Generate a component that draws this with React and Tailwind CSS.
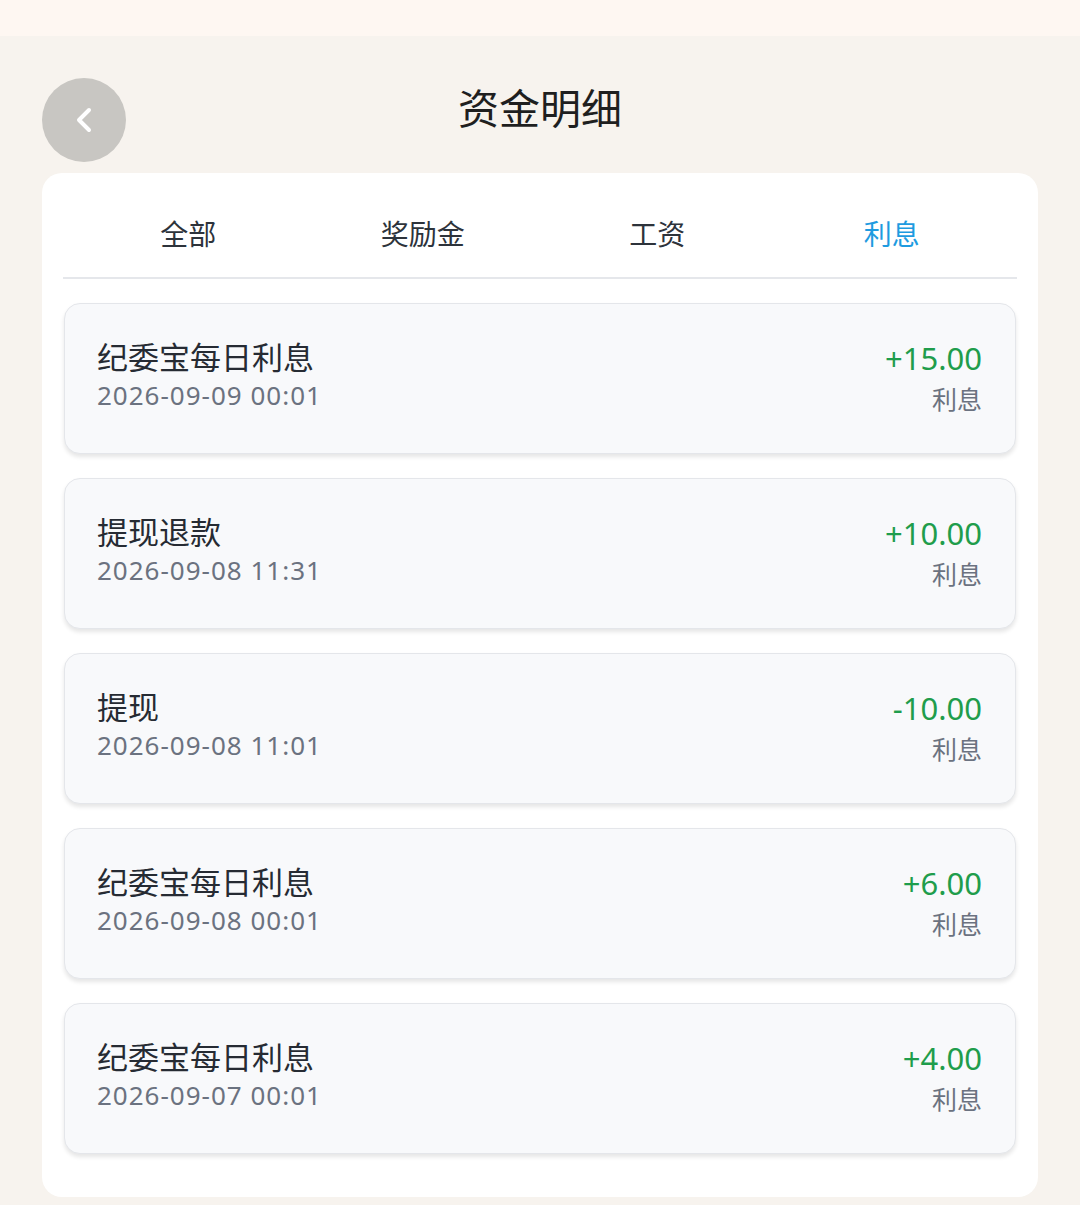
import { ChevronLeft } from "lucide-react";

const TABS = ["全部", "奖励金", "工资", "利息"];

const RECORDS = [
  { title: "纪委宝每日利息", time: "2026-09-09 00:01", amount: "+15.00" },
  { title: "提现退款", time: "2026-09-08 11:31", amount: "+10.00" },
  { title: "提现", time: "2026-09-08 11:01", amount: "-10.00" },
  { title: "纪委宝每日利息", time: "2026-09-08 00:01", amount: "+6.00" },
  { title: "纪委宝每日利息", time: "2026-09-07 00:01", amount: "+4.00" },
];

export default function App() {
  const activeTab = "利息";
  return (
    <div
      className="min-h-[1205px] w-[1080px] bg-[#f7f3ee]"
      style={{ fontFamily: "'Noto Sans', 'Noto Sans CJK SC', sans-serif" }}
    >
      {/* status strip */}
      <div className="h-[36px] bg-[#fef7f2]" />

      {/* Header */}
      <header className="relative flex items-center justify-center h-[84px] mt-[42px] px-[42px]">
        <button className="absolute left-[42px] top-0 w-[84px] h-[84px] rounded-full bg-[#c8c6c2] flex items-center justify-center text-white">
          <ChevronLeft size={40} strokeWidth={2.4} />
        </button>
        <h1 className="text-[41px] leading-none text-[#1f1f1f] -mt-[24px]">资金明细</h1>
      </header>

      {/* Card */}
      <div className="mx-[42px] mt-[11px] bg-white rounded-[20px] px-[21px] pb-[43px]">
        <nav className="grid grid-cols-4 h-[106px] border-b-2 border-[#e5e7eb] px-[8px]">
          {TABS.map((t) => (
            <div
              key={t}
              className={`flex items-center justify-center text-[28px] pt-[18px] ${
                t === activeTab ? "text-[#1e9be0]" : "text-[#2d333b]"
              }`}
            >
              {t}
            </div>
          ))}
        </nav>

        <div className="flex flex-col gap-[24px] mt-[24px] px-px">
          {RECORDS.map((r, i) => (
            <div
              key={i}
              className="h-[151px] flex items-center justify-between rounded-[16px] bg-[#f8f9fb] border border-[#e4e6ea] shadow-[0_3px_4px_rgba(0,0,0,0.1)] pl-[32px] pr-[33px]"
            >
              <div className="flex flex-col -mt-[7px]">
                <span className="text-[31px] leading-[40px] text-[#262b33]">{r.title}</span>
                <span className="text-[26px] leading-[36px] text-[#6b7280] tracking-[1px]">{r.time}</span>
              </div>
              <div className="flex flex-col items-end -mt-[1px]">
                <span className="text-[31px] leading-[42px] text-[#1f9d4c]">{r.amount}</span>
                <span className="text-[25px] leading-[40px] text-[#6b7280]">利息</span>
              </div>
            </div>
          ))}
        </div>
      </div>
    </div>
  );
}
